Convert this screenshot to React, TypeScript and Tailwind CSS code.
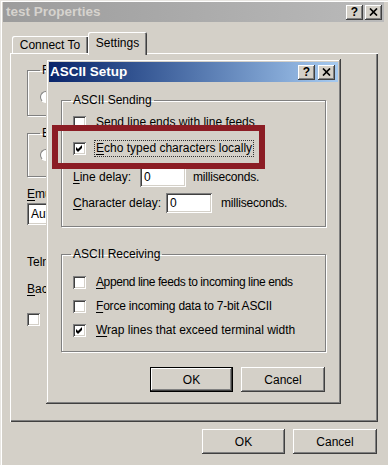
import type { ReactNode } from "react";

const raised =
  "shadow-[inset_-1px_-1px_0_#404040,inset_1px_1px_0_#ffffff,inset_-2px_-2px_0_#808080,inset_2px_2px_0_#d4d0c8]";
const sunken =
  "shadow-[inset_1px_1px_0_#808080,inset_-1px_-1px_0_#ffffff,inset_2px_2px_0_#404040,inset_-2px_-2px_0_#d4d0c8]";
const etched = "border border-[#808080] shadow-[inset_1px_1px_0_#ffffff,1px_1px_0_#ffffff]";

// mnemonic underline
function U({ children }: { children: ReactNode }) {
  return <span className="underline decoration-1 underline-offset-[2px]">{children}</span>;
}

function CloseGlyph() {
  return (
    <svg width="9" height="8" viewBox="0 0 9 8">
      <path d="M1 0.5 L8 7.5 M8 0.5 L1 7.5" stroke="#000" strokeWidth="1.7" />
    </svg>
  );
}

function CapButton({ children }: { children: ReactNode }) {
  return (
    <div
      className={`flex h-[15px] w-[17px] items-center justify-center bg-[#d4d0c8] text-[12px] font-bold leading-none ${raised}`}
    >
      {children}
    </div>
  );
}

function Check({ checked }: { checked?: boolean }) {
  return (
    <span className={`flex h-[13px] w-[13px] shrink-0 bg-white ${sunken}`}>
      {checked && (
        <svg width="13" height="13" viewBox="0 0 13 13">
          <polygon points="3,5 5,7 9,3 9,6 5,10 3,8" fill="#000" />
        </svg>
      )}
    </span>
  );
}

function CheckRow({
  checked,
  focus,
  children,
  height = "h-[20px]",
  tracking = "",
}: {
  checked?: boolean;
  focus?: boolean;
  children: ReactNode;
  height?: string;
  tracking?: string;
}) {
  return (
    <div className={`flex ${height} items-center gap-[8px]`}>
      <Check checked={checked} />
      <span
        className={`border px-[1px] leading-[15px] ${tracking} ${
          focus ? "border-dotted border-[#333]" : "border-transparent"
        }`}
      >
        {children}
      </span>
    </div>
  );
}

function Field({ value, width }: { value: string; width: string }) {
  return (
    <div className={`flex h-[20px] ${width} items-center bg-white pl-[4px] ${sunken}`}>{value}</div>
  );
}

function Button({ label, isDefault, width = "w-[83px]" }: { label: string; isDefault?: boolean; width?: string }) {
  if (isDefault) {
    return (
      <div className={`flex h-[25px] ${width} border border-black`}>
        <div className={`flex flex-1 items-center justify-center ${raised}`}>{label}</div>
      </div>
    );
  }
  return <div className={`flex h-[25px] ${width} items-center justify-center ${raised}`}>{label}</div>;
}

function Radio() {
  return (
    <span className="h-[12px] w-[12px] shrink-0 rounded-full border border-b-white border-l-[#808080] border-r-white border-t-[#808080] bg-white" />
  );
}

function AsciiSetup() {
  return (
    <div
      className={`absolute left-[46px] top-[59px] z-20 flex h-[345px] w-[295px] flex-col bg-[#d4d0c8] p-[3px] shadow-[inset_-1px_-1px_0_#404040,inset_1px_1px_0_#d4d0c8,inset_-2px_-2px_0_#808080,inset_2px_2px_0_#ffffff]`}
    >
      <div className="flex h-[20px] items-center justify-between bg-gradient-to-r from-[#0a246a] to-[#a6caf0] pl-[1px] pr-[3px]">
        <span className="text-[13.5px] font-bold text-white">ASCII Setup</span>
        <div className="flex gap-[3px]">
          <CapButton>?</CapButton>
          <CapButton>
            <CloseGlyph />
          </CapButton>
        </div>
      </div>

      <fieldset className={`ml-[12px] mt-[11px] w-[265px] pb-[13px] pl-[11px] pt-[5px] ${etched}`}>
        <legend className="ml-[-2px] px-[2px]">ASCII Sending</legend>
        <CheckRow>
          <U>S</U>end line ends with line feeds
        </CheckRow>
        <div className="mt-[6px]">
          <CheckRow checked focus>
            <U>E</U>cho typed characters locally
          </CheckRow>
        </div>
        <div className="mt-[9px] flex items-center">
          <span className="w-[67px]">
            <U>L</U>ine delay:
          </span>
          <Field value="0" width="w-[46px]" />
          <span className="ml-[7px] tracking-[-0.2px]">milliseconds.</span>
        </div>
        <div className="mt-[6px] flex items-center">
          <span className="w-[93px]">
            <U>C</U>haracter delay:
          </span>
          <Field value="0" width="w-[46px]" />
          <span className="ml-[9px] tracking-[-0.2px]">milliseconds.</span>
        </div>
      </fieldset>

      <fieldset className={`ml-[12px] mt-[20px] w-[265px] pb-[9px] pl-[11px] pt-[9px] ${etched}`}>
        <legend className="ml-[-2px] px-[2px]">ASCII Receiving</legend>
        <CheckRow height="h-[24px]" tracking="tracking-[-0.4px]">
          <U>A</U>ppend line feeds to incoming line ends
        </CheckRow>
        <CheckRow height="h-[24px]" tracking="tracking-[-0.2px]">
          <U>F</U>orce incoming data to 7-bit ASCII
        </CheckRow>
        <CheckRow height="h-[24px]" checked>
          <U>W</U>rap lines that exceed terminal width
        </CheckRow>
      </fieldset>

      <div className="mr-[13px] mt-[15px] flex justify-end gap-[8px]">
        <Button label="OK" isDefault />
        <Button label="Cancel" width="w-[84px]" />
      </div>
    </div>
  );
}

export default function App() {
  return (
    <div className="relative h-[465px] w-[388px] overflow-hidden bg-[#d4d0c8] font-['Liberation_Sans',Arial,sans-serif] text-[12px] leading-[14px] text-black shadow-[inset_1px_1px_0_#e8e6e2,inset_2px_2px_0_#ffffff]">
      <div className="flex flex-col">
        {/* outer title bar, inactive */}
        <div className="ml-[3px] mr-[4px] mt-[2px] flex h-[20px] items-center justify-between bg-gradient-to-r from-[#9c9c9c] to-[#bababa] pl-[3px] pr-[2px]">
          <span className="text-[13.5px] font-bold text-[#d6d3ce]">test Properties</span>
          <div className="flex gap-[2px]">
            <CapButton>?</CapButton>
            <CapButton>
              <CloseGlyph />
            </CapButton>
          </div>
        </div>

        {/* tabs */}
        <div className="relative z-10 ml-[12px] mt-[10px] flex h-[21px] items-end">
          <div className="flex h-[17px] w-[76px] justify-center rounded-tl-[2px] pt-[2px] shadow-[inset_1px_1px_0_#ffffff,inset_-1px_0_0_#404040,inset_-2px_0_0_#808080]">
            Connect To
          </div>
          <div className="mb-[-2px] flex h-[23px] w-[59px] justify-center rounded-t-[2px] bg-[#d4d0c8] pt-[4px] shadow-[inset_1px_1px_0_#ffffff,inset_-1px_0_0_#404040,inset_-2px_0_0_#808080]">
            Settings
          </div>
        </div>

        {/* tab panel, mostly hidden behind the ASCII Setup dialog */}
        <div className="ml-[10px] flex h-[369px] w-[368px] flex-col pl-[17px] pt-[10px] shadow-[inset_1px_1px_0_#ffffff,inset_-1px_-1px_0_#404040,inset_-2px_-2px_0_#808080]">
          <fieldset className={`h-[53px] w-[300px] pl-[12px] ${etched}`}>
            <legend className="px-[2px]">Function, arrow, and ctrl keys act as</legend>
            <div className="mt-[10px] flex h-[20px] items-center gap-[6px]">
              <Radio />
              <span>Terminal keys</span>
            </div>
          </fieldset>
          <fieldset className={`mt-[10px] h-[51px] w-[300px] pl-[12px] ${etched}`}>
            <legend className="px-[2px]">Backspace key sends</legend>
            <div className="mt-[5px] flex h-[20px] items-center gap-[6px]">
              <Radio />
              <span>Ctrl+H</span>
            </div>
          </fieldset>
          <div className="mt-[10px]">
            <U>E</U>mulation:
          </div>
          <div className={`mt-[2px] flex h-[22px] w-[150px] items-center bg-white pl-[4px] ${sunken}`}>
            Auto detect
          </div>
          <div className="mt-[30px]">Telnet terminal ID:</div>
          <div className="mt-[13px]">
            <U>B</U>ackscroll buffer lines:
          </div>
          <div className="mt-[16px] flex items-center gap-[8px]">
            <Check />
            <span>Play sound when connecting or disconnecting</span>
          </div>
        </div>

        {/* outer buttons */}
        <div className="mr-[11px] mt-[7px] flex justify-end gap-[8px]">
          <Button label="OK" />
          <Button label="Cancel" width="w-[84px]" />
        </div>
      </div>

      <AsciiSetup />

      {/* highlight */}
      <div className="absolute left-[52px] top-[125px] z-30 h-[44px] w-[213px] border-[6px] border-[#8b1c24]" />
    </div>
  );
}
